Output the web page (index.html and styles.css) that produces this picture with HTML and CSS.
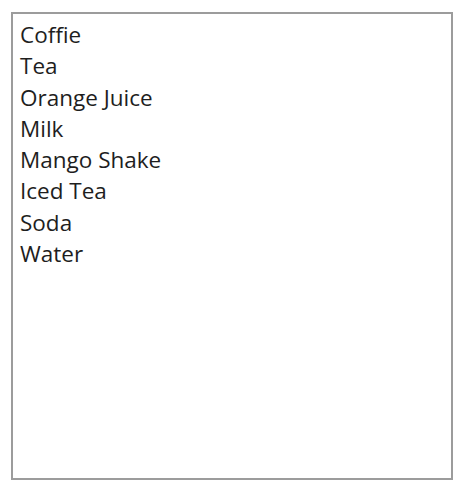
FILE: index.html
```html
<!DOCTYPE html>
<html>
<head>
<meta charset="utf-8">
<link rel="stylesheet" href="styles.css">
</head>
<body>
<div class="listbox">
  <ul class="items">
    <li>Coffie</li>
    <li>Tea</li>
    <li>Orange Juice</li>
    <li>Milk</li>
    <li>Mango Shake</li>
    <li>Iced Tea</li>
    <li>Soda</li>
    <li>Water</li>
  </ul>
</div>
</body>
</html>
```
FILE: styles.css
```css
html, body {
  margin: 0;
  padding: 0;
  background: #ffffff;
}
body {
  padding: 12px 0 0 11px;
}
.listbox {
  box-sizing: border-box;
  width: 442px;
  height: 468px;
  border: 2px solid #9c9c9c;
  background: #ffffff;
  padding: 5px 0 0 7px;
}
.items {
  list-style: none;
  margin: 0;
  padding: 0;
  font-family: "Open Sans", "Noto Sans", sans-serif;
  font-size: 22.5px;
  line-height: 31.3px;
  color: #1e1e1e;
}
.items li {
  margin: 0;
  padding: 0;
}
```
